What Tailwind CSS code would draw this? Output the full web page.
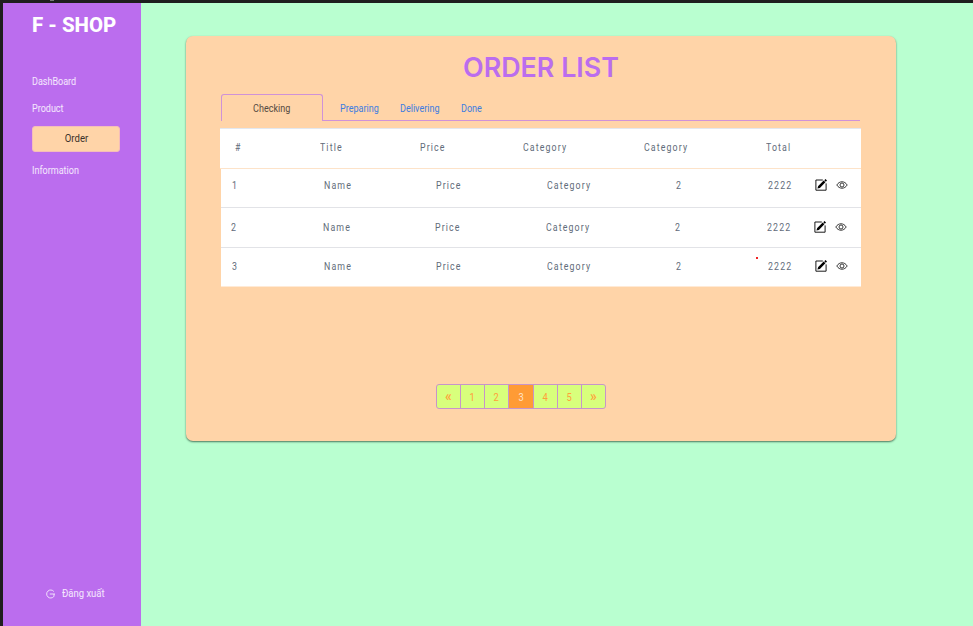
<!DOCTYPE html>
<html lang="vi">
<head>
<meta charset="utf-8">
<title>F - SHOP</title>
<script src="https://cdn.jsdelivr.net/npm/@tailwindcss/browser@4"></script>
</head>
<body class="w-[973px] h-[626px] overflow-hidden bg-[#1e1e1e] font-['Roboto',sans-serif] text-[11px] leading-4">
<svg class="hidden">
  <symbol id="edit" viewBox="0 0 12 12"><path d="M7.8 1H.9v10.2h10.2V4.4" fill="none" stroke="currentColor" stroke-width=".9"/><path d="M2.4 9.6l.8-2.6L8.7 1.6l1.7 1.7L4.9 8.9zM9.3 1.2L10.5 0 12 1.5l-1.2 1.2z" fill="currentColor"/></symbol>
  <symbol id="eye" viewBox="0 0 12 12"><path d="M.8 6C3.4 1.7 8.6 1.7 11.2 6 8.6 10.3 3.4 10.3.8 6z" fill="none" stroke="currentColor" stroke-width=".9"/><circle cx="6" cy="6" r="2" fill="none" stroke="currentColor" stroke-width=".9"/></symbol>
</svg>
<i class="absolute left-[50px] top-0 w-[4px] h-px bg-[#777]"></i>
<div class="flex h-full pt-[3px] pl-[3px]">
  <aside class="flex flex-col w-[138px] shrink-0 bg-[#bb6dee] pl-[29px] text-white/85">
    <h1 class="mt-[10px] h-6 text-[20px] leading-6 font-extrabold text-white whitespace-nowrap"><span class="inline-block origin-left scale-x-[1.02]">F - SHOP</span></h1>
    <nav class="flex flex-col mt-[37px]">
      <a class="h-[26px]"><span class="inline-block origin-left scale-x-[0.82]">DashBoard</span></a>
      <a class="h-[26px]"><span class="inline-block origin-left scale-x-[0.82] translate-y-px">Product</span></a>
      <a class="flex items-center justify-center w-[88px] h-[26px] rounded-[3px] bg-[#ffd4a8] border border-[#f5bdb9] text-[#3c332b]"><span class="inline-block scale-x-[0.87]">Order</span></a>
      <a class="mt-[11px]"><span class="inline-block origin-left scale-x-[0.82]">Information</span></a>
    </nav>
    <a class="flex items-center mt-auto mb-[24px] ml-[14px] h-4 gap-[7px]">
      <svg class="w-[9px] h-[10px]" viewBox="0 0 9 10" fill="none" stroke="currentColor" stroke-width=".9"><path d="M7.8 2.5A4 4 0 1 0 7.8 7.5M3.8 5H9M8 5v2.5"/></svg>
      <span class="inline-block origin-left scale-x-[0.86] whitespace-nowrap">Đăng xuất</span>
    </a>
  </aside>
  <main class="grow bg-[#b9ffd0] pt-[33px] pl-[45px]">
    <section class="flex flex-col w-[710px] h-[405px] rounded-[7px] bg-[#ffd4a8] shadow-[0_1px_2px_#4b765c]">
      <h2 class="mt-[16px] h-8 pl-[276.5px] text-[27px] leading-8 font-semibold text-[#bb6dee] font-['Inter',sans-serif] whitespace-nowrap"><span class="inline-block origin-left scale-x-[0.995]">ORDER LIST</span></h2>
      <div class="flex mt-[10px] ml-[35px] w-[639px] h-[27px] text-[#3e7de0]">
        <div class="flex items-center justify-center w-[102px] rounded-t-[3px] border border-b-0 border-[#cf92d8] text-[#554b42]"><span class="inline-block scale-x-[0.82] translate-y-px">Checking</span></div>
        <div class="flex grow pl-[17px] pt-[7px] border-b border-[#cf92d8]">
          <div class="w-[60px]"><span class="inline-block origin-left scale-x-[0.82]">Preparing</span></div>
          <div class="w-[61px]"><span class="inline-block origin-left scale-x-[0.82]">Delivering</span></div>
          <div><span class="inline-block origin-left scale-x-[0.82]">Done</span></div>
        </div>
      </div>
      <div class="mt-[7px] ml-[34px] w-[641px] text-[#626c7a] tracking-[1.4px]">
        <div class="grid grid-cols-[85px_100px_103px_121px_122px_60px] h-[40px] pl-[14.5px] pt-[11px] bg-white border-t border-[#e2e8f0]">
          <div><span class="inline-block origin-left scale-x-[0.8]">#</span></div><div><span class="inline-block origin-left scale-x-[0.8]">Title</span></div><div><span class="inline-block origin-left scale-x-[0.8]">Price</span></div><div><span class="inline-block origin-left scale-x-[0.8]">Category</span></div><div><span class="inline-block origin-left scale-x-[0.8]">Category</span></div><div><span class="inline-block origin-left scale-x-[0.8]">Total</span></div>
        </div>
        <div class="h-px bg-[#fde3c9]"></div>
        <div class="grid grid-cols-[92px_112px_111px_129px_92px_47px_21px_12px] h-[39px] ml-px pl-[11px] pt-[9px] bg-white border-b border-[#e2e3e7]">
          <div><span class="inline-block origin-left scale-x-[0.8]">1</span></div><div><span class="inline-block origin-left scale-x-[0.8]">Name</span></div><div><span class="inline-block origin-left scale-x-[0.8]">Price</span></div><div><span class="inline-block origin-left scale-x-[0.8]">Category</span></div><div><span class="inline-block origin-left scale-x-[0.8]">2</span></div><div><span class="inline-block origin-left scale-x-[0.8]">2222</span></div>
          <svg class="size-3 mt-px text-black"><use href="#edit"/></svg><svg class="size-3 mt-px text-[#222]"><use href="#eye"/></svg>
        </div>
        <div class="grid grid-cols-[92px_112px_111px_129px_92px_47px_21px_12px] h-[40px] ml-px pl-[9.5px] pt-[12px] bg-white border-b border-[#e2e3e7]">
          <div><span class="inline-block origin-left scale-x-[0.8]">2</span></div><div><span class="inline-block origin-left scale-x-[0.8]">Name</span></div><div><span class="inline-block origin-left scale-x-[0.8]">Price</span></div><div><span class="inline-block origin-left scale-x-[0.8]">Category</span></div><div><span class="inline-block origin-left scale-x-[0.8]">2</span></div><div><span class="inline-block origin-left scale-x-[0.8]">2222</span></div>
          <svg class="size-3 mt-px text-black"><use href="#edit"/></svg><svg class="size-3 mt-px text-[#222]"><use href="#eye"/></svg>
        </div>
        <div class="relative grid grid-cols-[92px_112px_111px_129px_92px_47px_21px_12px] h-[39px] ml-px pl-[11px] pt-[11px] bg-white border-b border-[#ffead6]">
          <div><span class="inline-block origin-left scale-x-[0.8]">3</span></div><div><span class="inline-block origin-left scale-x-[0.8]">Name</span></div><div><span class="inline-block origin-left scale-x-[0.8]">Price</span></div><div><span class="inline-block origin-left scale-x-[0.8]">Category</span></div><div><span class="inline-block origin-left scale-x-[0.8]">2</span></div><div><span class="inline-block origin-left scale-x-[0.8]">2222</span></div>
          <svg class="size-3 mt-px text-black"><use href="#edit"/></svg><svg class="size-3 mt-px text-[#222]"><use href="#eye"/></svg>
          <i class="absolute left-[535px] top-[9px] w-[2px] h-[2px] bg-[#f02424]"></i>
        </div>
      </div>
      <div class="flex mt-[97px] ml-[250px] w-[170px] h-[25px] rounded-[3px] overflow-hidden border border-[#c795c9] bg-[#d8ff7c] text-[#ffa13a] divide-x divide-[#c795c9] text-center leading-[25px]">
        <div class="w-6 shrink-0 text-[14px] leading-[22px] font-medium">«</div>
        <div class="w-6 shrink-0"><span class="inline-block scale-x-[0.85]">1</span></div>
        <div class="w-6 shrink-0"><span class="inline-block scale-x-[0.85]">2</span></div>
        <div class="w-[25px] shrink-0 bg-[#ff9b35] text-[#ffe3c8]"><span class="inline-block scale-x-[0.85]">3</span></div>
        <div class="w-6 shrink-0"><span class="inline-block scale-x-[0.85]">4</span></div>
        <div class="w-6 shrink-0"><span class="inline-block scale-x-[0.85]">5</span></div>
        <div class="grow text-[14px] leading-[22px] font-medium">»</div>
      </div>
    </section>
  </main>
</div>
</body>
</html>
